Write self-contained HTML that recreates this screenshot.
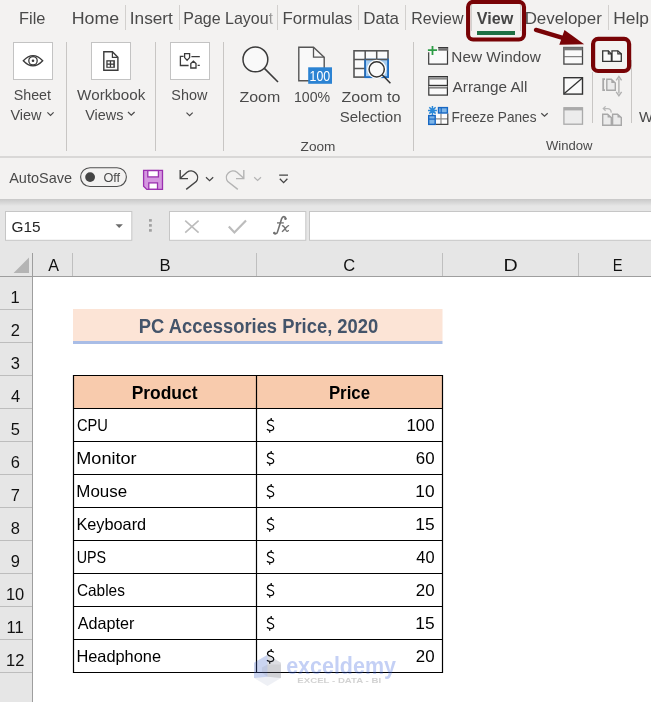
<!DOCTYPE html>
<html><head><meta charset="utf-8"><style>
html,body{margin:0;padding:0;width:651px;height:702px;overflow:hidden;background:#fff}
svg{position:absolute;left:0;top:0;display:block;will-change:transform}
text{font-family:"Liberation Sans",sans-serif;white-space:pre}
</style></head><body>
<svg width="651" height="702" viewBox="0 0 651 702">
<rect x="0" y="0" width="651" height="156" fill="#f3f2f1" />
<rect x="0" y="156" width="651" height="43" fill="#f3f2f1" />
<rect x="0" y="156" width="651" height="2" fill="#d9d8d7" />
<rect x="0" y="199" width="651" height="77" fill="#e6e6e6" />
<defs><linearGradient id="sh" x1="0" y1="0" x2="0" y2="1"><stop offset="0" stop-color="#c8c8c8"/><stop offset="1" stop-color="#e6e6e6"/></linearGradient></defs>
<rect x="0" y="199" width="651" height="7" fill="url(#sh)" />
<text x="19.09" y="24.00" font-size="17" font-weight="400" fill="#4a4a4a" textLength="26.37" lengthAdjust="spacingAndGlyphs" >File</text>
<text x="71.78" y="24.30" font-size="17" font-weight="400" fill="#4a4a4a" textLength="47.47" lengthAdjust="spacingAndGlyphs" >Home</text>
<text x="129.75" y="24.30" font-size="17" font-weight="400" fill="#4a4a4a" textLength="43.16" lengthAdjust="spacingAndGlyphs" >Insert</text>
<text x="183.22" y="24.30" font-size="17" font-weight="400" fill="#4a4a4a" textLength="89.87" lengthAdjust="spacingAndGlyphs" >Page Layout</text>
<defs><linearGradient id="fade" x1="0" y1="0" x2="1" y2="0"><stop offset="0" stop-color="#f3f2f1" stop-opacity="0"/><stop offset="1" stop-color="#f3f2f1" stop-opacity="1"/></linearGradient></defs>
<rect x="267" y="8" width="8" height="22" fill="url(#fade)" />
<text x="282.45" y="24.30" font-size="17" font-weight="400" fill="#4a4a4a" textLength="70.09" lengthAdjust="spacingAndGlyphs" >Formulas</text>
<text x="363.24" y="24.30" font-size="17" font-weight="400" fill="#4a4a4a" textLength="35.80" lengthAdjust="spacingAndGlyphs" >Data</text>
<text x="411.23" y="24.30" font-size="17" font-weight="400" fill="#4a4a4a" textLength="52.26" lengthAdjust="spacingAndGlyphs" >Review</text>
<text x="524.65" y="24.00" font-size="17" font-weight="400" fill="#4a4a4a" textLength="77.16" lengthAdjust="spacingAndGlyphs" >Developer</text>
<text x="613.21" y="24.00" font-size="17" font-weight="400" fill="#4a4a4a" textLength="35.71" lengthAdjust="spacingAndGlyphs" >Help</text>
<rect x="125" y="5" width="1" height="25" fill="#d2d0ce" />
<rect x="179" y="5" width="1" height="25" fill="#d2d0ce" />
<rect x="277" y="5" width="1" height="25" fill="#d2d0ce" />
<rect x="358" y="5" width="1" height="25" fill="#d2d0ce" />
<rect x="405" y="5" width="1" height="25" fill="#d2d0ce" />
<rect x="608" y="5" width="1" height="25" fill="#d2d0ce" />
<rect x="471" y="5" width="1" height="26" fill="#d2d0ce" />
<rect x="520" y="5" width="1" height="26" fill="#d2d0ce" />
<text x="476.82" y="23.80" font-size="17" font-weight="700" fill="#444" textLength="36.41" lengthAdjust="spacingAndGlyphs" >View</text>
<rect x="477" y="31" width="38" height="4" fill="#1e7145" />
<rect x="66" y="42" width="1" height="109" fill="#c8c6c4" />
<rect x="155" y="42" width="1" height="109" fill="#c8c6c4" />
<rect x="223" y="42" width="1" height="109" fill="#c8c6c4" />
<rect x="413" y="42" width="1" height="109" fill="#c8c6c4" />
<rect x="13.5" y="42.5" width="39" height="37" fill="#fff" stroke="#c3c3c3" stroke-width="1"/>
<path d="M23.3 60.8 Q33 50.6 42.7 60.8 Q33 71 23.3 60.8 Z" fill="none" stroke="#3b3b3b" stroke-width="1.3"/>
<circle cx="33" cy="60.8" r="4.2" fill="#fff" stroke="#3b3b3b" stroke-width="1.3"/><circle cx="33" cy="60.8" r="1.3" fill="#3b3b3b"/>
<text x="13.76" y="100.00" font-size="15" font-weight="400" fill="#4a4a4a" textLength="37.26" lengthAdjust="spacingAndGlyphs" >Sheet</text>
<text x="10.43" y="119.80" font-size="15" font-weight="400" fill="#4a4a4a" textLength="31.07" lengthAdjust="spacingAndGlyphs" >View</text>
<path d="M47.4 112.4 L50.5 115.4 L53.6 112.4" fill="none" stroke="#4a4a4a" stroke-width="1.2"/>
<rect x="91.5" y="42.5" width="39" height="37" fill="#fff" stroke="#c3c3c3" stroke-width="1"/>
<path d="M103.8 51.7 H112.4 L117.9 57.3 V70.2 H103.8 Z" fill="#fbfbfb" stroke="#3b3b3b" stroke-width="1.4"/>
<path d="M112.4 51.7 V57.3 H117.9" fill="none" stroke="#3b3b3b" stroke-width="1.2"/>
<rect x="106.3" y="60.2" width="8.6" height="7.6" fill="#3b3b3b" />
<rect x="107.6" y="61.5" width="2.2" height="2.0" fill="#fff" />
<rect x="111.1" y="61.5" width="2.2" height="2.0" fill="#fff" />
<rect x="107.6" y="64.8" width="2.2" height="2.0" fill="#fff" />
<rect x="111.1" y="64.8" width="2.2" height="2.0" fill="#fff" />
<text x="77.12" y="100.00" font-size="15" font-weight="400" fill="#4a4a4a" textLength="68.15" lengthAdjust="spacingAndGlyphs" >Workbook</text>
<text x="85.23" y="119.60" font-size="15" font-weight="400" fill="#4a4a4a" textLength="38.27" lengthAdjust="spacingAndGlyphs" >Views</text>
<path d="M128 112 L131.3 115.2 L134.6 112" fill="none" stroke="#4a4a4a" stroke-width="1.2"/>
<rect x="170.5" y="42.5" width="39" height="37" fill="#fff" stroke="#c3c3c3" stroke-width="1"/>
<path d="M183.6 56.3 H180.4 V65.5 H188.6 M191.4 56.6 H199.8 M197.6 65.4 H199.8" fill="none" stroke="#3b3b3b" stroke-width="1.3"/>
<path d="M184.6 53.6 H189.6 V57.6 L187.1 60.2 L184.6 57.6 Z" fill="#fff" stroke="#3b3b3b" stroke-width="1.3"/>
<path d="M190.8 68 V63.6 L193.4 61.2 L196 63.6 V68 Z" fill="#fff" stroke="#3b3b3b" stroke-width="1.3"/>
<text x="171.35" y="100.00" font-size="15" font-weight="400" fill="#4a4a4a" textLength="36.00" lengthAdjust="spacingAndGlyphs" >Show</text>
<path d="M186.5 112.6 L189.6 115.6 L192.7 112.6" fill="none" stroke="#4a4a4a" stroke-width="1.2"/>
<circle cx="255.4" cy="59.4" r="12.4" fill="#f9f9f9" stroke="#3b3b3b" stroke-width="1.5"/>
<path d="M264.4 68.4 L278 82" stroke="#3b3b3b" stroke-width="1.6"/>
<text x="239.52" y="102.00" font-size="15" font-weight="400" fill="#4a4a4a" textLength="40.75" lengthAdjust="spacingAndGlyphs" >Zoom</text>
<path d="M298.8 47.2 H313.5 L324.2 57.2 V80.7 H298.8 Z" fill="#f9f9f9" stroke="#555" stroke-width="1.4"/>
<path d="M313.5 47.2 V57.2 H324.2" fill="none" stroke="#555" stroke-width="1.3"/>
<rect x="308.2" y="67.3" width="23.8" height="16.5" fill="#2b83d3" />
<text x="309.57" y="81.20" font-size="14.5" font-weight="400" fill="#fff" textLength="20.60" lengthAdjust="spacingAndGlyphs" >100</text>
<text x="293.94" y="102.00" font-size="15" font-weight="400" fill="#4a4a4a" textLength="36.22" lengthAdjust="spacingAndGlyphs" >100%</text>
<rect x="354" y="50.8" width="34" height="26.3" fill="#fafafa" stroke="#555" stroke-width="1.6"/>
<rect x="365.2" y="59.4" width="23" height="18" fill="#a6cdf0" stroke="#1f70c8" stroke-width="1.4"/>
<path d="M365.2 50.8 V77.1 M376.7 50.8 V59.4 M354 59.4 H365.2 M354 68.4 H365.2 M365.2 59.4 H388" stroke="#555" stroke-width="1.5"/>
<path d="M365.2 59.4 V77.1 H388 V59.4" fill="none" stroke="#1f70c8" stroke-width="1.5"/>
<circle cx="376.7" cy="69.3" r="8" fill="none" stroke="#fff" stroke-width="3.2"/>
<circle cx="376.7" cy="69.3" r="7.6" fill="#f9f9f9" stroke="#333" stroke-width="1.5"/>
<path d="M382.2 74.8 L390.4 83.2" stroke="#333" stroke-width="1.5"/>
<text x="341.52" y="102.00" font-size="15" font-weight="400" fill="#4a4a4a" textLength="58.87" lengthAdjust="spacingAndGlyphs" >Zoom to</text>
<text x="339.72" y="122.00" font-size="15" font-weight="400" fill="#4a4a4a" textLength="61.84" lengthAdjust="spacingAndGlyphs" >Selection</text>
<text x="300.59" y="150.70" font-size="13" font-weight="400" fill="#4a4a4a" textLength="34.84" lengthAdjust="spacingAndGlyphs" >Zoom</text>
<path d="M428.7 52.2 V64.1 H447.5 V47.6 H438.3" fill="#fafafa" stroke="#3a3a3a" stroke-width="1.2"/>
<rect x="438.3" y="47.1" width="9.8" height="1.1" fill="#3a3a3a" />
<rect x="438.3" y="48.2" width="9.8" height="2.5" fill="#707070" />
<path d="M427.9 50.1 H437.1 M432.5 45.9 V55" stroke="#2e9d47" stroke-width="1.8"/>
<text x="451.37" y="61.60" font-size="15" font-weight="400" fill="#4a4a4a" textLength="89.45" lengthAdjust="spacingAndGlyphs" >New Window</text>
<rect x="428.8" y="76.6" width="18.6" height="18.5" fill="#fafafa" stroke="#333" stroke-width="1.2"/>
<rect x="428.8" y="77.2" width="18.6" height="2.4" fill="#8a8a8a" />
<rect x="428.8" y="84.8" width="18.6" height="1.2" fill="#333" />
<rect x="428.8" y="86" width="18.6" height="1.2" fill="#cfcfcf" />
<rect x="428.8" y="87.2" width="18.6" height="1.3" fill="#6a6a6a" />
<text x="452.60" y="91.70" font-size="15" font-weight="400" fill="#4a4a4a" textLength="74.82" lengthAdjust="spacingAndGlyphs" >Arrange All</text>
<rect x="435.8" y="113.6" width="12" height="11" fill="#fdfdfd" />
<path d="M441 113.6 V124.3 M435.8 118.9 H447.8" stroke="#8a8a8a" stroke-width="1.2"/>
<path d="M447.8 113.6 V124.3 H435.8" fill="none" stroke="#444" stroke-width="1.2"/>
<rect x="438.5" y="107.6" width="8.9" height="5.4" fill="#7fb6e8" stroke="#1767c2" stroke-width="1.4"/>
<path d="M441.2 107.6 V113" stroke="#1767c2" stroke-width="1.2"/>
<rect x="428.7" y="115.6" width="6.5" height="8.8" fill="#7fb6e8" stroke="#1767c2" stroke-width="1.4"/>
<path d="M428.7 119.1 H435.2" stroke="#1767c2" stroke-width="1.2"/>
<path d="M432.45 106 V114.9 M428 110.45 H436.9 M429.3 107.3 L435.6 113.6 M435.6 107.3 L429.3 113.6" stroke="#2a88d8" stroke-width="1.5"/>
<text x="451.51" y="121.70" font-size="15" font-weight="400" fill="#4a4a4a" textLength="84.98" lengthAdjust="spacingAndGlyphs" >Freeze Panes</text>
<path d="M541.3 113.2 L544.5 116.2 L547.7 113.2" fill="none" stroke="#4a4a4a" stroke-width="1.2"/>
<rect x="563.9" y="47.5" width="18.6" height="16.6" fill="#fafafa" stroke="#444" stroke-width="1.3"/>
<rect x="563.9" y="47.2" width="18.6" height="3.1" fill="#777" />
<rect x="563.9" y="56.2" width="18.6" height="1" fill="#666" />
<rect x="563.9" y="77.7" width="18.6" height="16.4" fill="#fafafa" stroke="#333" stroke-width="1.4"/>
<path d="M564.3 93.6 L582.1 78.2" stroke="#333" stroke-width="1.3"/>
<rect x="563.9" y="107.8" width="18.6" height="16.4" fill="#ececec" stroke="#aaa" stroke-width="1.3"/>
<rect x="563.9" y="107.4" width="18.6" height="3" fill="#aaa" />
<rect x="592" y="72" width="1" height="51" fill="#c8c6c4" />
<rect x="631" y="60" width="1" height="63" fill="#c8c6c4" />
<path d="M602.7 50.8 H608.3 L611.4 53.9 V61.3 H602.7 Z M612 50.8 H617.8 L621.3 53.9 V61.3 H612 Z" fill="#fafafa" stroke="#333" stroke-width="1.3"/>
<path d="M608.3 50.8 V53.9 H611.4 M617.8 50.8 V53.9 H621.3" fill="none" stroke="#333" stroke-width="1.1"/>
<path d="M605 79.2 H603.2 V90.2 H605" fill="none" stroke="#a8a8a8" stroke-width="1.8"/>
<path d="M606.8 79.2 H611.3 L615.3 83 V90.2 H606.8 Z" fill="#ebebeb" stroke="#a8a8a8" stroke-width="1.4"/>
<path d="M611.3 79.2 V83 H615.3 Z" fill="#a8a8a8"/>
<path d="M618.9 78.5 V93.5" stroke="#b0b0b0" stroke-width="1.4"/>
<path d="M616.2 80.4 L618.9 76.4 L621.6 80.4 M616.2 91.8 L618.9 95.8 L621.6 91.8" fill="none" stroke="#b0b0b0" stroke-width="1.4"/>
<path d="M602.7 114.2 H607.6 L611.3 117.6 V125.2 H602.7 Z M612.6 114.2 H617.5 L621.3 117.6 V125.2 H612.6 Z" fill="#ebebeb" stroke="#a8a8a8" stroke-width="1.4"/>
<path d="M607.6 114.2 V117.6 H611.3 Z M617.5 114.2 V117.6 H621.3 Z" fill="#a8a8a8"/>
<path d="M603.5 108.6 H607.5 Q611 108.6 611.3 112.6 M605.6 106.4 L603.3 108.6 L605.6 110.8" fill="none" stroke="#b8b8b8" stroke-width="1.3"/>
<text x="639.12" y="121.50" font-size="15" font-weight="400" fill="#4a4a4a" textLength="14.16" lengthAdjust="spacingAndGlyphs" >W</text>
<text x="545.93" y="150.00" font-size="13" font-weight="400" fill="#4a4a4a" textLength="46.52" lengthAdjust="spacingAndGlyphs" >Window</text>
<text x="9.20" y="183.00" font-size="15" font-weight="400" fill="#4a4a4a" textLength="62.88" lengthAdjust="spacingAndGlyphs" >AutoSave</text>
<rect x="80.6" y="167.7" width="45.8" height="18.8" rx="9.4" fill="none" stroke="#505050" stroke-width="1.1"/>
<circle cx="90.1" cy="177.1" r="4.9" fill="#444"/>
<text x="103.43" y="181.80" font-size="12.8" font-weight="400" fill="#4a4a4a" textLength="16.71" lengthAdjust="spacingAndGlyphs" >Off</text>
<path d="M143.6 170.4 H162.5 V189.4 H146.8 L143.6 186.2 Z" fill="#d597e0" stroke="#9b30b0" stroke-width="1.3"/>
<rect x="147.8" y="170.6" width="10.6" height="6.3" fill="#fff" stroke="#9b30b0" stroke-width="1.3"/>
<rect x="148.8" y="182.9" width="8.7" height="6.3" fill="#fff" stroke="#9b30b0" stroke-width="1.3"/>
<path d="M180.3 178.2 L187 172.3 A6.6 6.6 0 0 1 196.2 181.6 L186.2 189.4" fill="none" stroke="#444" stroke-width="1.4"/>
<path d="M180.2 170 V178.6 H188" fill="none" stroke="#444" stroke-width="1.4"/>
<path d="M206 177.3 L209.6 180.7 L213.2 177.3" fill="none" stroke="#444" stroke-width="1.2"/>
<path d="M243.7 178.2 L237 172.3 A6.6 6.6 0 0 0 227.8 181.6 L237.8 189.4" fill="none" stroke="#b4b4b4" stroke-width="1.4"/>
<path d="M243.8 170 V178.6 H236" fill="none" stroke="#b4b4b4" stroke-width="1.4"/>
<path d="M254.2 177.3 L257.6 180.5 L261 177.3" fill="none" stroke="#b4b4b4" stroke-width="1.2"/>
<path d="M279.2 175.2 H288 M279.8 178.8 L283.6 182.6 L287.4 178.8" fill="none" stroke="#444" stroke-width="1.3"/>
<rect x="5.5" y="211.5" width="126.3" height="28.8" fill="#fff" stroke="#c6c6c6" stroke-width="1"/>
<text x="11.53" y="232.30" font-size="15.5" font-weight="400" fill="#262626" textLength="29.09" lengthAdjust="spacingAndGlyphs" >G15</text>
<path d="M115.5 224.3 H122.9 L119.2 228.1 Z" fill="#6b6b6b"/>
<rect x="149" y="219.1" width="2.8" height="2.6" fill="#a0a0a0" />
<rect x="149" y="224.1" width="2.8" height="2.6" fill="#a0a0a0" />
<rect x="149" y="229.1" width="2.8" height="2.6" fill="#a0a0a0" />
<rect x="169.5" y="211.5" width="136.3" height="28.8" fill="#fff" stroke="#c6c6c6" stroke-width="1"/>
<path d="M185.2 220.7 L198.6 232.6 M198.6 220.7 L185.2 232.6" stroke="#bcbcbc" stroke-width="1.6"/>
<path d="M228.8 226.6 L234.4 232.4 L246 220.6" fill="none" stroke="#bcbcbc" stroke-width="2.2"/>
<path d="M285.8 218.6 C285.2 215.9 282.6 216 281.6 218.8 L277.6 231.6 C276.9 234.3 274.6 234.4 274 232.9" fill="none" stroke="#707070" stroke-width="1.6" stroke-linecap="round"/>
<circle cx="285.4" cy="218.8" r="1.2" fill="#707070"/><circle cx="274.4" cy="233" r="1.2" fill="#707070"/>
<path d="M277 222.9 H283.8" stroke="#707070" stroke-width="1.3"/>
<path d="M282.4 225.8 C284.2 225.2 285.2 229.5 286.3 230.8 C286.9 231.6 287.8 231.3 288.4 230.6 M288.6 225.6 C287.6 225.4 283.8 230.6 282.3 231.5" fill="none" stroke="#707070" stroke-width="1.3" stroke-linecap="round"/>
<rect x="309.5" y="211.5" width="360" height="28.8" fill="#fff" stroke="#c6c6c6" stroke-width="1"/>
<rect x="0" y="276" width="32.5" height="426" fill="#e6e6e6" />
<rect x="33" y="277" width="618" height="425" fill="#fff" />
<path d="M29 257.6 V273 H13.6 Z" fill="#b4b4b4"/>
<rect x="72" y="253" width="1" height="23" fill="#bfbfbf" />
<rect x="256" y="253" width="1" height="23" fill="#bfbfbf" />
<rect x="442" y="253" width="1" height="23" fill="#bfbfbf" />
<rect x="578" y="253" width="1" height="23" fill="#bfbfbf" />
<rect x="0" y="276" width="651" height="1" fill="#9e9e9e" />
<rect x="32" y="253" width="1" height="449" fill="#9e9e9e" />
<rect x="0" y="309" width="32" height="1" fill="#bdbdbd" />
<rect x="0" y="342" width="32" height="1" fill="#bdbdbd" />
<rect x="0" y="375" width="32" height="1" fill="#bdbdbd" />
<rect x="0" y="408" width="32" height="1" fill="#bdbdbd" />
<rect x="0" y="441" width="32" height="1" fill="#bdbdbd" />
<rect x="0" y="474" width="32" height="1" fill="#bdbdbd" />
<rect x="0" y="507" width="32" height="1" fill="#bdbdbd" />
<rect x="0" y="540" width="32" height="1" fill="#bdbdbd" />
<rect x="0" y="573" width="32" height="1" fill="#bdbdbd" />
<rect x="0" y="606" width="32" height="1" fill="#bdbdbd" />
<rect x="0" y="639" width="32" height="1" fill="#bdbdbd" />
<rect x="0" y="672" width="32" height="1" fill="#bdbdbd" />
<text x="48.20" y="270.80" font-size="16.5" font-weight="400" fill="#111" textLength="10.73" lengthAdjust="spacingAndGlyphs" >A</text>
<text x="159.57" y="270.80" font-size="16.5" font-weight="400" fill="#111" textLength="11.10" lengthAdjust="spacingAndGlyphs" >B</text>
<text x="343.17" y="270.80" font-size="16.5" font-weight="400" fill="#111" textLength="11.94" lengthAdjust="spacingAndGlyphs" >C</text>
<text x="503.43" y="270.80" font-size="16.5" font-weight="400" fill="#111" textLength="14.20" lengthAdjust="spacingAndGlyphs" >D</text>
<text x="612.83" y="270.80" font-size="16.5" font-weight="400" fill="#111" textLength="9.79" lengthAdjust="spacingAndGlyphs" >E</text>
<text x="10.57" y="303.30" font-size="16.5" font-weight="400" fill="#111" textLength="9.18" lengthAdjust="spacingAndGlyphs" >1</text>
<text x="10.82" y="336.30" font-size="16.5" font-weight="400" fill="#111" textLength="9.18" lengthAdjust="spacingAndGlyphs" >2</text>
<text x="10.82" y="369.30" font-size="16.5" font-weight="400" fill="#111" textLength="9.18" lengthAdjust="spacingAndGlyphs" >3</text>
<text x="10.90" y="402.30" font-size="16.5" font-weight="400" fill="#111" textLength="9.18" lengthAdjust="spacingAndGlyphs" >4</text>
<text x="10.82" y="435.30" font-size="16.5" font-weight="400" fill="#111" textLength="9.18" lengthAdjust="spacingAndGlyphs" >5</text>
<text x="10.74" y="468.30" font-size="16.5" font-weight="400" fill="#111" textLength="9.18" lengthAdjust="spacingAndGlyphs" >6</text>
<text x="10.82" y="501.30" font-size="16.5" font-weight="400" fill="#111" textLength="9.18" lengthAdjust="spacingAndGlyphs" >7</text>
<text x="10.78" y="534.30" font-size="16.5" font-weight="400" fill="#111" textLength="9.18" lengthAdjust="spacingAndGlyphs" >8</text>
<text x="10.82" y="567.30" font-size="16.5" font-weight="400" fill="#111" textLength="9.18" lengthAdjust="spacingAndGlyphs" >9</text>
<text x="5.91" y="600.30" font-size="16.5" font-weight="400" fill="#111" textLength="18.35" lengthAdjust="spacingAndGlyphs" >10</text>
<text x="6.61" y="633.30" font-size="16.5" font-weight="400" fill="#111" textLength="17.13" lengthAdjust="spacingAndGlyphs" >11</text>
<text x="6.04" y="666.30" font-size="16.5" font-weight="400" fill="#111" textLength="18.35" lengthAdjust="spacingAndGlyphs" >12</text>
<rect x="73" y="309" width="369.5" height="32" fill="#fce4d6" />
<rect x="73" y="341" width="369.5" height="3" fill="#a9bde6" />
<text x="138.81" y="332.90" font-size="19.5" font-weight="700" fill="#44546a" textLength="239.48" lengthAdjust="spacingAndGlyphs" >PC Accessories Price, 2020</text>
<rect x="73" y="375" width="369.5" height="33" fill="#f8cbad" />
<path d="M73 375.5 H443 M73 408.5 H443 M73 441.5 H443 M73 474.5 H443 M73 507.5 H443 M73 540.5 H443 M73 573.5 H443 M73 606.5 H443 M73 639.5 H443 M73 672.5 H443 M73.5 375 V673 M256.5 375 V673 M442.5 375 V673" stroke="#000" stroke-width="1.2"/>
<text x="131.67" y="399.00" font-size="18.5" font-weight="700" fill="#000" textLength="65.86" lengthAdjust="spacingAndGlyphs" >Product</text>
<text x="328.91" y="398.70" font-size="18.5" font-weight="700" fill="#000" textLength="41.10" lengthAdjust="spacingAndGlyphs" >Price</text>
<text x="76.97" y="431.20" font-size="16.5" font-weight="400" fill="#000" textLength="30.95" lengthAdjust="spacingAndGlyphs" >CPU</text>
<g transform="translate(0 0)"><path d="M273.7 421.4 C272.6 419.6 268 419.2 267.5 422.3 C267.1 424.6 270.4 425 272 425.8 C274.6 427 274.4 430.7 270.6 430.5 C268.6 430.4 267.6 429.9 266.9 429.3 M271.2 417.9 V419.8 M269.7 430.4 V432.8" fill="none" stroke="#000" stroke-width="1.25"/></g>
<text x="406.44" y="431.20" font-size="16.5" font-weight="400" fill="#000" textLength="28.11" lengthAdjust="spacingAndGlyphs" >100</text>
<text x="76.25" y="464.20" font-size="16.5" font-weight="400" fill="#000" textLength="60.40" lengthAdjust="spacingAndGlyphs" >Monitor</text>
<g transform="translate(0 33)"><path d="M273.7 421.4 C272.6 419.6 268 419.2 267.5 422.3 C267.1 424.6 270.4 425 272 425.8 C274.6 427 274.4 430.7 270.6 430.5 C268.6 430.4 267.6 429.9 266.9 429.3 M271.2 417.9 V419.8 M269.7 430.4 V432.8" fill="none" stroke="#000" stroke-width="1.25"/></g>
<text x="415.76" y="464.20" font-size="16.5" font-weight="400" fill="#000" textLength="18.77" lengthAdjust="spacingAndGlyphs" >60</text>
<text x="76.34" y="497.20" font-size="16.5" font-weight="400" fill="#000" textLength="50.84" lengthAdjust="spacingAndGlyphs" >Mouse</text>
<g transform="translate(0 66)"><path d="M273.7 421.4 C272.6 419.6 268 419.2 267.5 422.3 C267.1 424.6 270.4 425 272 425.8 C274.6 427 274.4 430.7 270.6 430.5 C268.6 430.4 267.6 429.9 266.9 429.3 M271.2 417.9 V419.8 M269.7 430.4 V432.8" fill="none" stroke="#000" stroke-width="1.25"/></g>
<text x="415.30" y="497.20" font-size="16.5" font-weight="400" fill="#000" textLength="19.24" lengthAdjust="spacingAndGlyphs" >10</text>
<text x="76.40" y="530.20" font-size="16.5" font-weight="400" fill="#000" textLength="69.78" lengthAdjust="spacingAndGlyphs" >Keyboard</text>
<g transform="translate(0 99)"><path d="M273.7 421.4 C272.6 419.6 268 419.2 267.5 422.3 C267.1 424.6 270.4 425 272 425.8 C274.6 427 274.4 430.7 270.6 430.5 C268.6 430.4 267.6 429.9 266.9 429.3 M271.2 417.9 V419.8 M269.7 430.4 V432.8" fill="none" stroke="#000" stroke-width="1.25"/></g>
<text x="415.30" y="530.20" font-size="16.5" font-weight="400" fill="#000" textLength="19.34" lengthAdjust="spacingAndGlyphs" >15</text>
<text x="76.63" y="563.20" font-size="16.5" font-weight="400" fill="#000" textLength="29.44" lengthAdjust="spacingAndGlyphs" >UPS</text>
<g transform="translate(0 132)"><path d="M273.7 421.4 C272.6 419.6 268 419.2 267.5 422.3 C267.1 424.6 270.4 425 272 425.8 C274.6 427 274.4 430.7 270.6 430.5 C268.6 430.4 267.6 429.9 266.9 429.3 M271.2 417.9 V419.8 M269.7 430.4 V432.8" fill="none" stroke="#000" stroke-width="1.25"/></g>
<text x="416.27" y="563.20" font-size="16.5" font-weight="400" fill="#000" textLength="18.24" lengthAdjust="spacingAndGlyphs" >40</text>
<text x="76.93" y="596.20" font-size="16.5" font-weight="400" fill="#000" textLength="47.98" lengthAdjust="spacingAndGlyphs" >Cables</text>
<g transform="translate(0 165)"><path d="M273.7 421.4 C272.6 419.6 268 419.2 267.5 422.3 C267.1 424.6 270.4 425 272 425.8 C274.6 427 274.4 430.7 270.6 430.5 C268.6 430.4 267.6 429.9 266.9 429.3 M271.2 417.9 V419.8 M269.7 430.4 V432.8" fill="none" stroke="#000" stroke-width="1.25"/></g>
<text x="415.76" y="596.20" font-size="16.5" font-weight="400" fill="#000" textLength="18.77" lengthAdjust="spacingAndGlyphs" >20</text>
<text x="77.70" y="629.20" font-size="16.5" font-weight="400" fill="#000" textLength="56.68" lengthAdjust="spacingAndGlyphs" >Adapter</text>
<g transform="translate(0 198)"><path d="M273.7 421.4 C272.6 419.6 268 419.2 267.5 422.3 C267.1 424.6 270.4 425 272 425.8 C274.6 427 274.4 430.7 270.6 430.5 C268.6 430.4 267.6 429.9 266.9 429.3 M271.2 417.9 V419.8 M269.7 430.4 V432.8" fill="none" stroke="#000" stroke-width="1.25"/></g>
<text x="415.30" y="629.20" font-size="16.5" font-weight="400" fill="#000" textLength="19.34" lengthAdjust="spacingAndGlyphs" >15</text>
<text x="76.39" y="662.20" font-size="16.5" font-weight="400" fill="#000" textLength="84.67" lengthAdjust="spacingAndGlyphs" >Headphone</text>
<g transform="translate(0 231)"><path d="M273.7 421.4 C272.6 419.6 268 419.2 267.5 422.3 C267.1 424.6 270.4 425 272 425.8 C274.6 427 274.4 430.7 270.6 430.5 C268.6 430.4 267.6 429.9 266.9 429.3 M271.2 417.9 V419.8 M269.7 430.4 V432.8" fill="none" stroke="#000" stroke-width="1.25"/></g>
<text x="415.76" y="662.20" font-size="16.5" font-weight="400" fill="#000" textLength="18.77" lengthAdjust="spacingAndGlyphs" >20</text>
<g>
<polygon points="254,662.8 267.5,654.8 281,662.8 281,677.9 267.5,685.9 254,677.9" fill="#5a6e9a" fill-opacity="0.1"/>
<polygon points="254,662.8 267.5,654.8 267.5,676.8 254,677.9" fill="#3d63dd" fill-opacity="0.2"/>
<polygon points="267.5,654.8 281,662.8 281,677.9 267.5,676.8" fill="#606060" fill-opacity="0.12"/>
<polygon points="262,667.5 267.5,664.5 281,664.5 281,677.9 267.5,676.8 262,673" fill="#606060" fill-opacity="0.1"/>
<text x="286.14" y="674.00" font-size="24" font-weight="700" fill="#3d63dd" textLength="109.86" lengthAdjust="spacingAndGlyphs" fill-opacity="0.3">exceldemy</text>
<text x="297.37" y="683.00" font-size="8" font-weight="700" fill="#777" textLength="83.76" lengthAdjust="spacingAndGlyphs" fill-opacity="0.33">EXCEL - DATA - BI</text>
</g>
<rect x="468.1" y="1.9" width="55.9" height="37.6" rx="5" fill="none" stroke="#780306" stroke-width="4.1"/>
<rect x="593.1" y="38.9" width="36" height="32.1" rx="5" fill="none" stroke="#780306" stroke-width="4.2"/>
<path d="M536 29.9 L566 38.9" stroke="#780306" stroke-width="4.4" stroke-linecap="round"/>
<path d="M584.2 44.2 L564.5 30 L559.3 44.8 Z" fill="#780306"/>
</svg>
</body></html>
